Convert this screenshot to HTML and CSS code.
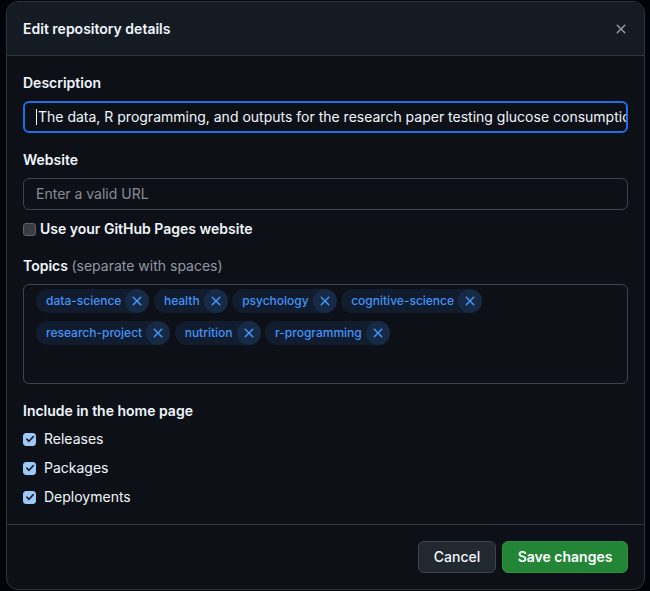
FILE: index.html
```html
<!DOCTYPE html>
<html lang="en">
<head>
<meta charset="utf-8">
<title>Edit repository details</title>
<link rel="stylesheet" href="styles.css">
</head>
<body>
<div class="dialog">
  <div class="dialog-header">
    <h1 class="dialog-title">Edit repository details</h1>
    <button class="close-btn" aria-label="Close">
      <svg width="16" height="16" viewBox="0 0 16 16"><path fill="currentColor" d="M3.72 3.72a.75.75 0 0 1 1.06 0L8 6.94l3.22-3.22a.749.749 0 0 1 1.275.326.749.749 0 0 1-.215.734L9.06 8l3.22 3.22a.749.749 0 0 1-.326 1.275.749.749 0 0 1-.734-.215L8 9.06l-3.22 3.22a.751.751 0 0 1-1.042-.018.751.751 0 0 1-.018-1.042L6.94 8 3.72 4.78a.75.75 0 0 1 0-1.06Z"/></svg>
    </button>
  </div>
  <div class="dialog-body">
    <div class="group">
      <div class="label">Description</div>
      <div class="input input-focus"><span class="caret"></span><span class="input-text">The data, R programming, and outputs for the research paper testing glucose consumption and cognitive performance</span></div>
    </div>
    <div class="group">
      <div class="label">Website</div>
      <div class="input"><span class="placeholder">Enter a valid URL</span></div>
      <div class="check-row check-row-bold">
        <span class="box"></span>
        <span>Use your GitHub Pages website</span>
      </div>
    </div>
    <div class="group">
      <div class="label">Topics <span class="muted">(separate with spaces)</span></div>
      <div class="topics">
        <span class="tag"><span class="tag-text">data-science</span><span class="tag-x"><svg width="16" height="16" viewBox="0 0 16 16"><path fill="currentColor" d="M3.72 3.72a.75.75 0 0 1 1.06 0L8 6.94l3.22-3.22a.749.749 0 0 1 1.275.326.749.749 0 0 1-.215.734L9.06 8l3.22 3.22a.749.749 0 0 1-.326 1.275.749.749 0 0 1-.734-.215L8 9.06l-3.22 3.22a.751.751 0 0 1-1.042-.018.751.751 0 0 1-.018-1.042L6.94 8 3.72 4.78a.75.75 0 0 1 0-1.06Z"/></svg></span></span>
        <span class="tag"><span class="tag-text">health</span><span class="tag-x"><svg width="16" height="16" viewBox="0 0 16 16"><path fill="currentColor" d="M3.72 3.72a.75.75 0 0 1 1.06 0L8 6.94l3.22-3.22a.749.749 0 0 1 1.275.326.749.749 0 0 1-.215.734L9.06 8l3.22 3.22a.749.749 0 0 1-.326 1.275.749.749 0 0 1-.734-.215L8 9.06l-3.22 3.22a.751.751 0 0 1-1.042-.018.751.751 0 0 1-.018-1.042L6.94 8 3.72 4.78a.75.75 0 0 1 0-1.06Z"/></svg></span></span>
        <span class="tag"><span class="tag-text">psychology</span><span class="tag-x"><svg width="16" height="16" viewBox="0 0 16 16"><path fill="currentColor" d="M3.72 3.72a.75.75 0 0 1 1.06 0L8 6.94l3.22-3.22a.749.749 0 0 1 1.275.326.749.749 0 0 1-.215.734L9.06 8l3.22 3.22a.749.749 0 0 1-.326 1.275.749.749 0 0 1-.734-.215L8 9.06l-3.22 3.22a.751.751 0 0 1-1.042-.018.751.751 0 0 1-.018-1.042L6.94 8 3.72 4.78a.75.75 0 0 1 0-1.06Z"/></svg></span></span>
        <span class="tag"><span class="tag-text">cognitive-science</span><span class="tag-x"><svg width="16" height="16" viewBox="0 0 16 16"><path fill="currentColor" d="M3.72 3.72a.75.75 0 0 1 1.06 0L8 6.94l3.22-3.22a.749.749 0 0 1 1.275.326.749.749 0 0 1-.215.734L9.06 8l3.22 3.22a.749.749 0 0 1-.326 1.275.749.749 0 0 1-.734-.215L8 9.06l-3.22 3.22a.751.751 0 0 1-1.042-.018.751.751 0 0 1-.018-1.042L6.94 8 3.72 4.78a.75.75 0 0 1 0-1.06Z"/></svg></span></span>
        <span class="tag"><span class="tag-text">research-project</span><span class="tag-x"><svg width="16" height="16" viewBox="0 0 16 16"><path fill="currentColor" d="M3.72 3.72a.75.75 0 0 1 1.06 0L8 6.94l3.22-3.22a.749.749 0 0 1 1.275.326.749.749 0 0 1-.215.734L9.06 8l3.22 3.22a.749.749 0 0 1-.326 1.275.749.749 0 0 1-.734-.215L8 9.06l-3.22 3.22a.751.751 0 0 1-1.042-.018.751.751 0 0 1-.018-1.042L6.94 8 3.72 4.78a.75.75 0 0 1 0-1.06Z"/></svg></span></span>
        <span class="tag"><span class="tag-text">nutrition</span><span class="tag-x"><svg width="16" height="16" viewBox="0 0 16 16"><path fill="currentColor" d="M3.72 3.72a.75.75 0 0 1 1.06 0L8 6.94l3.22-3.22a.749.749 0 0 1 1.275.326.749.749 0 0 1-.215.734L9.06 8l3.22 3.22a.749.749 0 0 1-.326 1.275.749.749 0 0 1-.734-.215L8 9.06l-3.22 3.22a.751.751 0 0 1-1.042-.018.751.751 0 0 1-.018-1.042L6.94 8 3.72 4.78a.75.75 0 0 1 0-1.06Z"/></svg></span></span>
        <span class="tag"><span class="tag-text">r-programming</span><span class="tag-x"><svg width="16" height="16" viewBox="0 0 16 16"><path fill="currentColor" d="M3.72 3.72a.75.75 0 0 1 1.06 0L8 6.94l3.22-3.22a.749.749 0 0 1 1.275.326.749.749 0 0 1-.215.734L9.06 8l3.22 3.22a.749.749 0 0 1-.326 1.275.749.749 0 0 1-.734-.215L8 9.06l-3.22 3.22a.751.751 0 0 1-1.042-.018.751.751 0 0 1-.018-1.042L6.94 8 3.72 4.78a.75.75 0 0 1 0-1.06Z"/></svg></span></span>
      </div>
    </div>
    <div class="group">
      <div class="label">Include in the home page</div>
      <div class="check-list">
        <div class="check-row">
          <span class="box box-checked"><svg width="10" height="10" viewBox="0 0 10 10"><path d="M1.8 5.2 L4 7.3 L8.3 2.6" fill="none" stroke="currentColor" stroke-width="1.6" stroke-linecap="round" stroke-linejoin="round"/></svg></span>
          <span class="check-label">Releases</span>
        </div>
        <div class="check-row">
          <span class="box box-checked"><svg width="10" height="10" viewBox="0 0 10 10"><path d="M1.8 5.2 L4 7.3 L8.3 2.6" fill="none" stroke="currentColor" stroke-width="1.6" stroke-linecap="round" stroke-linejoin="round"/></svg></span>
          <span class="check-label">Packages</span>
        </div>
        <div class="check-row">
          <span class="box box-checked"><svg width="10" height="10" viewBox="0 0 10 10"><path d="M1.8 5.2 L4 7.3 L8.3 2.6" fill="none" stroke="currentColor" stroke-width="1.6" stroke-linecap="round" stroke-linejoin="round"/></svg></span>
          <span class="check-label">Deployments</span>
        </div>
      </div>
    </div>
  </div>
  <div class="dialog-footer">
    <button class="btn btn-cancel">Cancel</button>
    <button class="btn btn-primary">Save changes</button>
  </div>
</div>
</body>
</html>
```

FILE: styles.css
```css
* { box-sizing: border-box; }

html, body {
  margin: 0;
  height: 100%;
}

body {
  background: #010409;
  font-family: Inter, "Noto Sans", "Liberation Sans", sans-serif;
  font-size: 14px;
  line-height: 20px;
  color: #f0f6fc;
  padding-top: 1px;
  overflow: hidden;
}

.dialog {
  margin-left: 6px;
  width: 639px;
  border: 1px solid #30363d;
  border-radius: 12px;
  background: #0d1117;
  overflow: hidden;
}

.dialog-header {
  height: 54px;
  display: flex;
  align-items: center;
  justify-content: space-between;
  padding: 0 15px 0 16px;
  background: #151b23;
  border-bottom: 1px solid #30363d;
}

.dialog-title {
  margin: 0;
  font-size: 14px;
  font-weight: 600;
  line-height: 20px;
}

.close-btn {
  width: 32px;
  height: 32px;
  display: flex;
  align-items: center;
  justify-content: center;
  padding: 0;
  margin-right: -8px;
  border: 0;
  background: transparent;
  color: #9198a1;
}

.dialog-body {
  padding: 17px 16px 17px;
}

.group + .group {
  margin-top: 17px;
}

.label {
  font-weight: 600;
  margin-bottom: 8px;
}

.muted {
  font-weight: 400;
  color: #9198a1;
}

.input {
  height: 32px;
  border: 1px solid #3d444d;
  border-radius: 6px;
  padding: 0 12px;
  display: flex;
  align-items: center;
  white-space: nowrap;
  overflow: hidden;
  background: #0d1117;
}

.input-focus {
  border: 2px solid #1f6feb;
  padding: 0 11px;
}

.caret {
  display: inline-block;
  width: 1px;
  height: 16px;
  background: #f0f6fc;
  margin-right: 1px;
  flex: none;
}

.input-text {
  color: #f0f6fc;
}

.placeholder {
  color: #858c95;
}

.check-row {
  display: flex;
  align-items: center;
  height: 20px;
  margin-top: 9px;
}

.check-row-bold {
  font-weight: 600;
  gap: 4px;
}

.box {
  width: 13px;
  height: 13px;
  border-radius: 3px;
  background: #3a3d42;
  border: 1px solid #5c6067;
  flex: none;
}

.box-checked {
  background: #9ec8f8;
  border-color: #9ec8f8;
  color: #1c232b;
  display: flex;
  align-items: center;
  justify-content: center;
}

.check-list .check-row {
  margin-top: 9px;
  gap: 8px;
}

.check-list .check-row:first-child {
  margin-top: 8px;
}

.check-label {
  font-weight: 400;
}

.topics {
  height: 100px;
  border: 1px solid #3d444d;
  border-radius: 6px;
  padding: 4px 12px;
  display: flex;
  flex-wrap: wrap;
  align-content: flex-start;
  row-gap: 8px;
  column-gap: 4.5px;
}

.tag {
  display: inline-flex;
  align-items: center;
  height: 24px;
  border-radius: 12px;
  background: #111d2e;
  color: #4493f8;
  font-size: 12px;
  font-weight: 500;
  line-height: 18px;
}

.tag-text {
  padding-left: 10px;
  padding-right: 4px;
}

.tag-x {
  width: 24px;
  height: 24px;
  border-radius: 12px;
  background: #172a45;
  display: flex;
  align-items: center;
  justify-content: center;
}

.dialog-footer {
  border-top: 1px solid #30363d;
  padding: 16px;
  display: flex;
  justify-content: flex-end;
  gap: 6px;
}

.btn {
  height: 32px;
  border-radius: 6px;
  border: 1px solid #3d444d;
  background: #212830;
  color: #f0f6fc;
  font-family: inherit;
  font-size: 14px;
  font-weight: 500;
  line-height: 20px;
}

.btn-cancel {
  width: 78px;
  padding: 0;
}

.btn-primary {
  width: 126px;
  padding: 0;
  background: #238636;
  border-color: #2a8f3e;
  color: #ffffff;
  font-weight: 600;
}
```
